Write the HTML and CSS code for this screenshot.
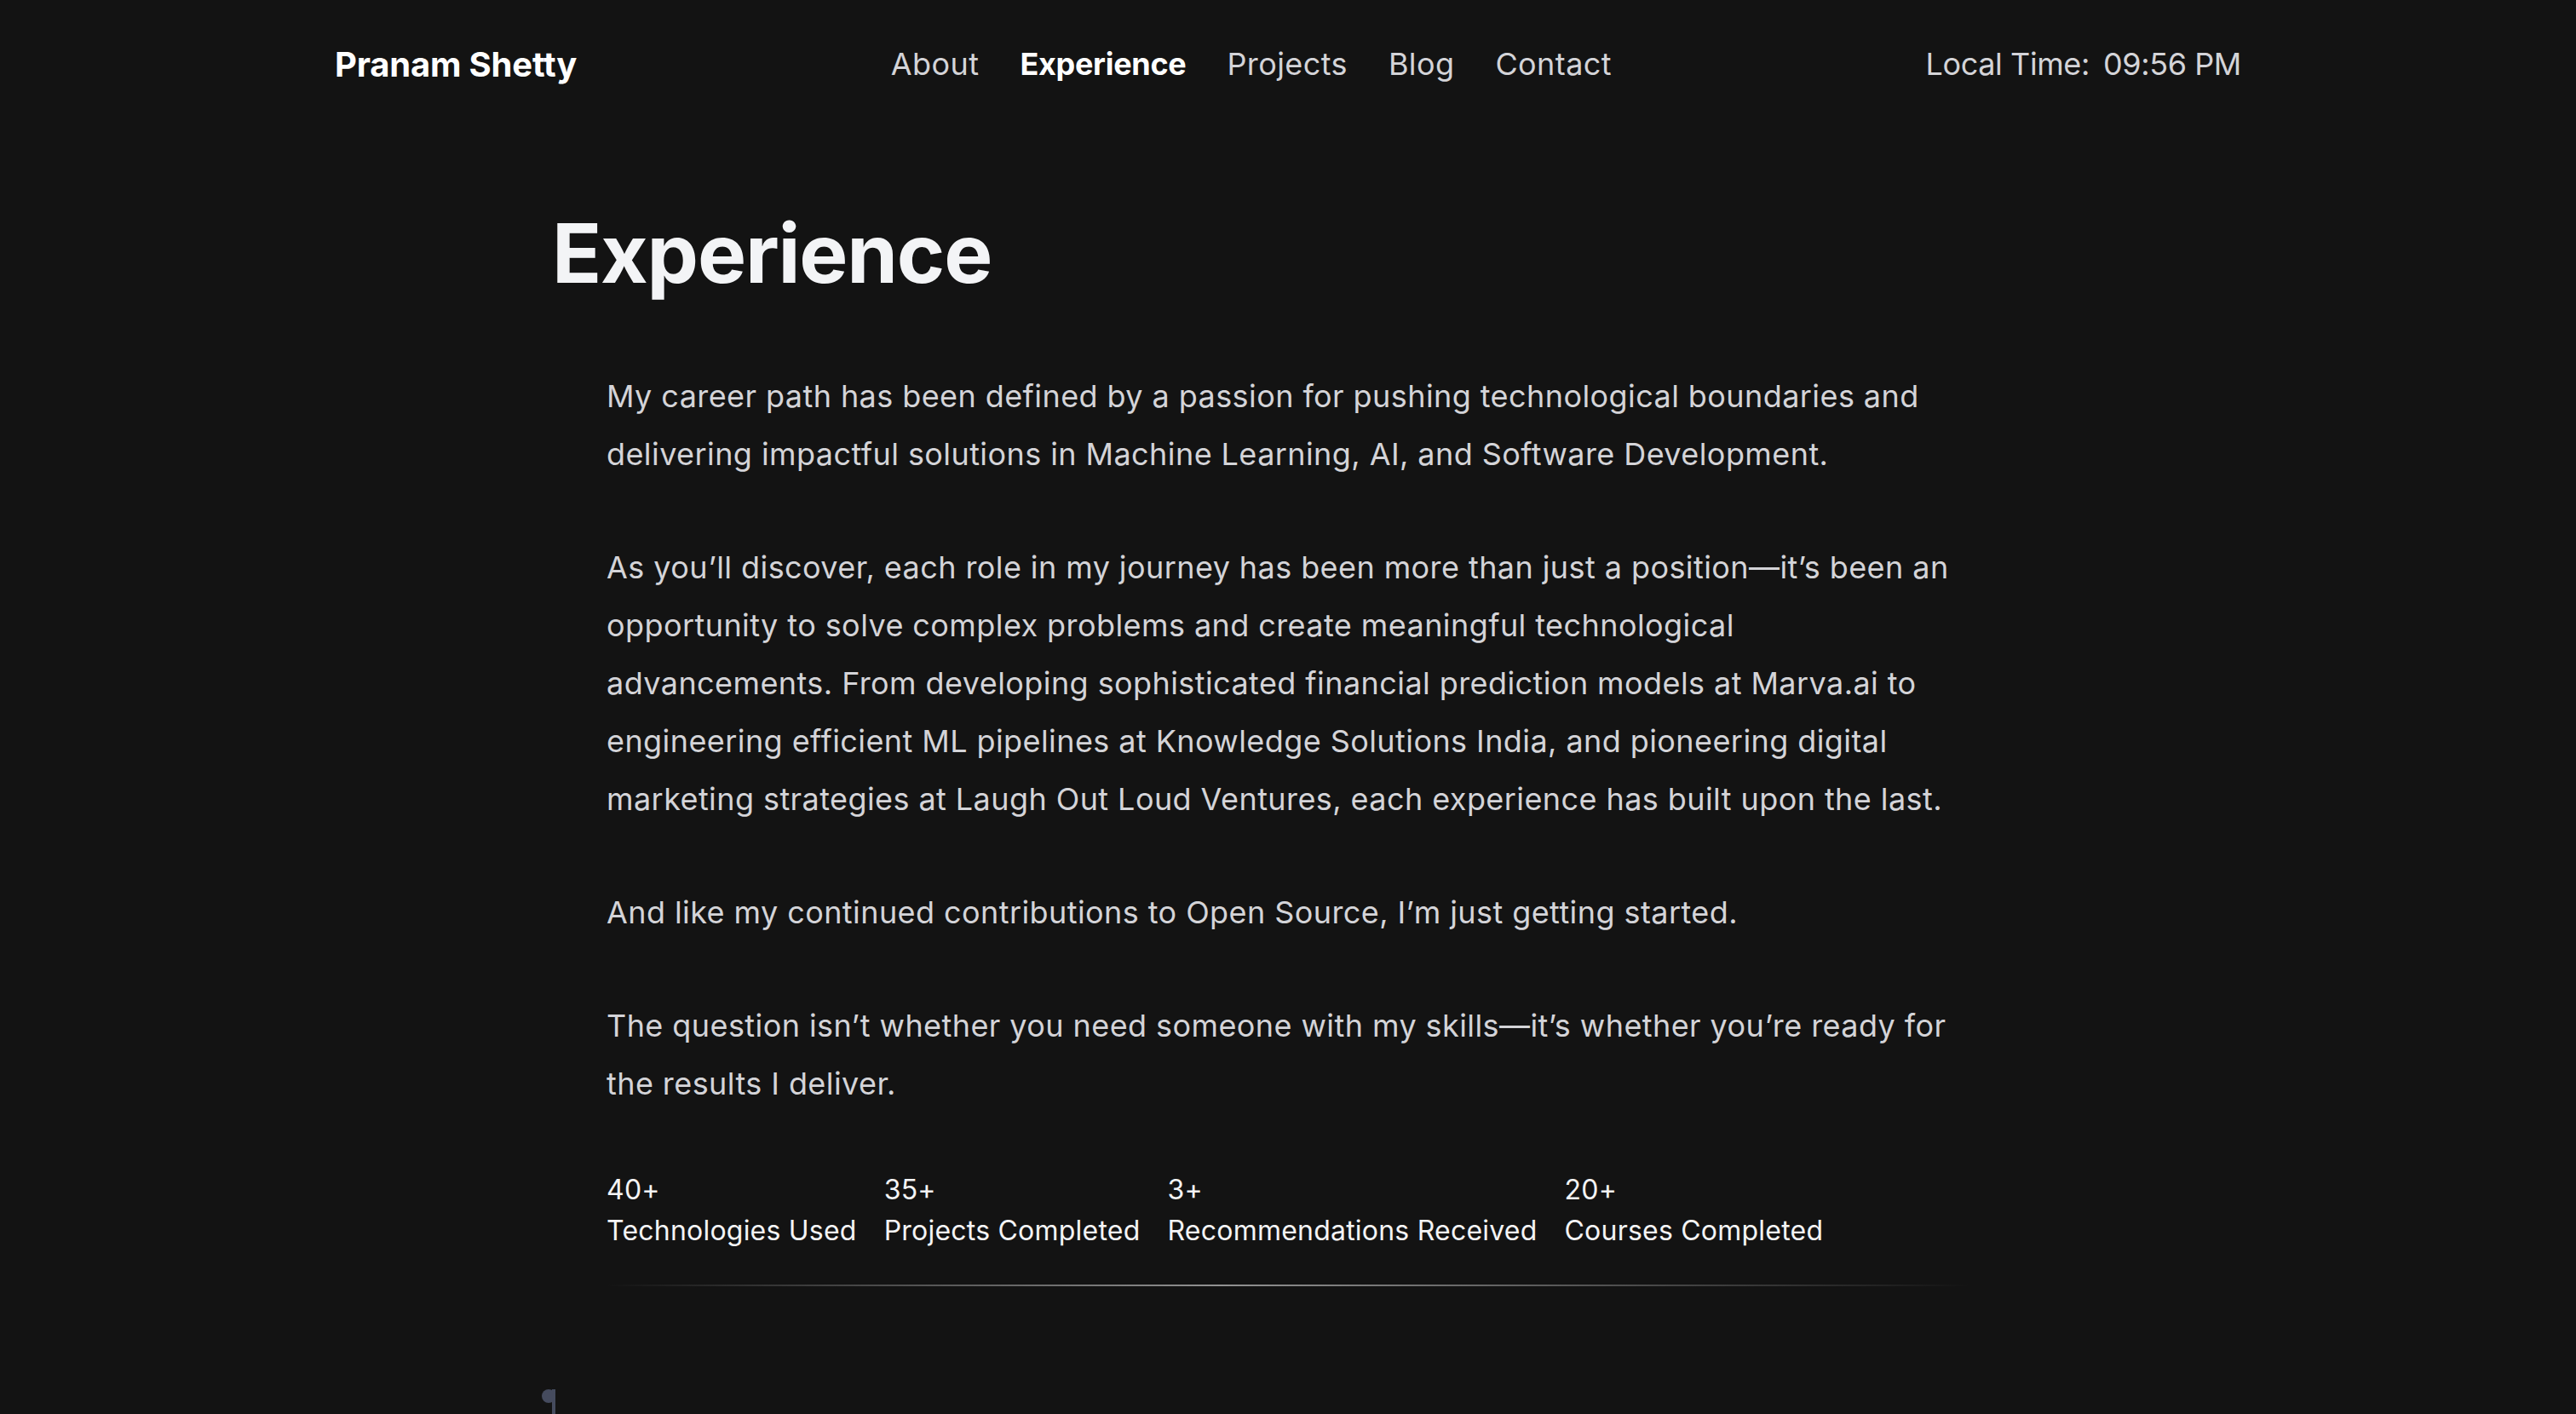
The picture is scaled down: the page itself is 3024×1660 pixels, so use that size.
FILE: index.html
```html
<!DOCTYPE html>
<html lang="en">
<head>
<meta charset="utf-8">
<title>Experience | Pranam Shetty</title>
<link rel="stylesheet" href="styles.css">
</head>
<body>
<header class="site-header">
  <a class="logo" href="#">Pranam Shetty</a>
  <nav class="nav">
    <a href="#">About</a>
    <a class="active" href="#">Experience</a>
    <a href="#">Projects</a>
    <a href="#">Blog</a>
    <a href="#">Contact</a>
  </nav>
  <div class="clock"><span>Local Time:</span><span class="clock-time">09:56 PM</span></div>
</header>
<main class="page">
  <h1 class="title">Experience</h1>
  <div class="intro">
    <p>My career path has been defined by a passion for pushing technological boundaries and<br>delivering impactful solutions in Machine Learning, AI, and Software Development.</p>
    <p>As you’ll discover, each role in my journey has been more than just a position—it’s been an<br>opportunity to solve complex problems and create meaningful technological<br>advancements. From developing sophisticated financial prediction models at Marva.ai to<br>engineering efficient ML pipelines at Knowledge Solutions India, and pioneering digital<br>marketing strategies at Laugh Out Loud Ventures, each experience has built upon the last.</p>
    <p>And like my continued contributions to Open Source, I’m just getting started.</p>
    <p>The question isn’t whether you need someone with my skills—it’s whether you’re ready for<br>the results I deliver.</p>
  </div>
  <ul class="stats">
    <li><span class="stat-num">40+</span><span class="stat-label">Technologies Used</span></li>
    <li><span class="stat-num">35+</span><span class="stat-label">Projects Completed</span></li>
    <li><span class="stat-num">3+</span><span class="stat-label">Recommendations Received</span></li>
    <li><span class="stat-num">20+</span><span class="stat-label">Courses Completed</span></li>
  </ul>
  <div class="divider"></div>
  <div class="timeline"><span class="timeline-dot"></span></div>
</main>
</body>
</html>
```
FILE: styles.css
```css
* { box-sizing: border-box; }
html, body { margin: 0; padding: 0; }
body {
  background: #131313;
  color: #d4d4d8;
  font-family: Inter, "Noto Sans", "DejaVu Sans", sans-serif;
}
a { color: inherit; text-decoration: none; }

.site-header {
  width: 2238px;
  height: 150px;
  margin: 0 auto;
  display: flex;
  align-items: center;
  justify-content: space-between;
}
.logo {
  font-size: 40px;
  font-weight: 700;
  letter-spacing: -0.2px;
  color: #ffffff;
}
.nav {
  display: flex;
  gap: 48px;
  font-size: 36px;
  letter-spacing: 0.4px;
  color: #d4d4d8;
}
.nav .active {
  color: #ffffff;
  font-weight: 700;
  letter-spacing: -0.3px;
}
.clock {
  font-size: 36px;
  letter-spacing: -0.4px;
  color: #d4d4d8;
}
.clock-time { margin-left: 16px; }

.page {
  width: 1728px;
  margin: 0 auto;
  padding-top: 99px;
}
.title {
  margin: 0 0 86px;
  font-size: 96px;
  line-height: 96px;
  font-weight: 700;
  letter-spacing: -1.2px;
  color: #f3f4f6;
}
.intro { padding: 0 64px; }
.intro p {
  margin: 0 0 65px;
  font-size: 36px;
  line-height: 68px;
  letter-spacing: 0.42px;
  white-space: nowrap;
}
.intro p:last-child { margin-bottom: 0; }

.stats {
  list-style: none;
  margin: 67px 64px 0;
  padding: 0;
  display: flex;
  gap: 32px;
  font-size: 32px;
  line-height: 48px;
  letter-spacing: 0.22px;
  color: #f4f4f5;
}
.stats li { display: flex; flex-direction: column; }

.divider {
  height: 2px;
  margin: 39px 64px 0;
  background: linear-gradient(90deg, rgba(160,160,160,0), rgba(160,160,160,0.9) 45%, rgba(160,160,160,0));
}

.timeline {
  position: relative;
  margin-top: 121px;
  height: 32px;
  border-left: 4px solid #454b5e;
}
.timeline-dot {
  position: absolute;
  left: -16px;
  top: 0;
  width: 16px;
  height: 16px;
  border-radius: 50%;
  background: #454b5e;
}
```
